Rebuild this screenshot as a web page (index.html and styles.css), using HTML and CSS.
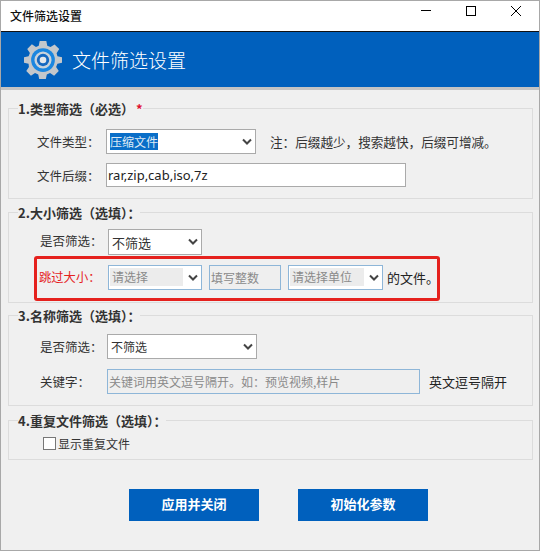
FILE: index.html
```html
<!DOCTYPE html>
<html lang="zh-CN">
<head>
    <meta charset="UTF-8">
    <title>文件筛选设置</title>
    <link rel="stylesheet" href="styles.css">
</head>
<body>
<div class="window">
    <div class="titlebar">
        <span class="title-text">文件筛选设置</span>
        <div class="win-btns">
            <svg width="12" height="12" viewBox="0 0 12 12"><path d="M1 5.500h10" stroke="#000" fill="none"/></svg>
            <svg width="12" height="12" viewBox="0 0 12 12"><rect x="1.500" y="1.500" width="9" height="9" stroke="#000" fill="none"/></svg>
            <svg width="12" height="12" viewBox="0 0 12 12"><path d="M1 1l10 10M11 1L1 11" stroke="#000" fill="none"/></svg>
        </div>
    </div>
    <div class="banner">
        <svg class="gear" width="38" height="38" viewBox="0 0 40 40">
            <path fill="#c3c7cb" d="M16.500 0h7l1 5 3.400 1.400 4.300-2.800 4.900 4.900-2.800 4.300L35.200 16l4.800 1v6l-4.800 1-1.400 3.400 2.800 4.300-4.900 4.900-4.300-2.800-3.400 1.400-1 4.800h-7l-1-4.800-3.400-1.400-4.300 2.800-4.900-4.900 2.800-4.300L4.800 24 0 23v-6l4.800-1 1.400-3.400-2.800-4.300 4.900-4.900 4.300 2.800L15.500 5z"/>
            <circle cx="20" cy="20" r="12.500" fill="#1a86e0"/>
            <circle cx="20" cy="20" r="9" fill="#c9d3dc"/>
            <circle cx="20" cy="20" r="6.500" fill="#1568c0"/>
            <circle cx="20" cy="20" r="3.500" fill="#e4e8ec"/>
        </svg>
        <h1 class="banner-title">文件筛选设置</h1>
    </div>
    <form class="content">
        <fieldset class="group group-type">
            <legend>1.类型筛选（必选）<span class="star">*</span></legend>
            <div class="row row-type">
                <label class="lbl">文件类型：</label>
                <div class="fake-select w150"><span class="picked">压缩文件</span><svg class="chev" width="10" height="7" viewBox="0 0 10 7"><path d="M1 1.500l4 4 4-4" fill="none" stroke="#444" stroke-width="2"/></svg></div>
                <span class="note">注：后缀越少，搜索越快，后缀可增减。</span>
            </div>
            <div class="row row-type row-second">
                <label class="lbl">文件后缀：</label>
                <div class="field w300">rar,zip,cab,iso,7z</div>
            </div>
        </fieldset>

        <fieldset class="group group-size">
            <legend>2.大小筛选（选填）：</legend>
            <div class="row row-size">
                <label class="lbl lbl-size">是否筛选：</label>
                <div class="fake-select w94 big">不筛选<svg class="chev" width="10" height="7" viewBox="0 0 10 7"><path d="M1 1.500l4 4 4-4" fill="none" stroke="#444" stroke-width="2"/></svg></div>
            </div>
            <div class="skip-box">
                <label class="lbl-red">跳过大小：</label>
                <div class="fake-select w94 off"><span class="off-text">请选择</span><svg class="chev" width="10" height="7" viewBox="0 0 10 7"><path d="M1 1.500l4 4 4-4" fill="none" stroke="#444" stroke-width="2"/></svg></div>
                <div class="field off w72">填写整数</div>
                <div class="fake-select w95 off"><span class="off-text">请选择单位</span><svg class="chev" width="10" height="7" viewBox="0 0 10 7"><path d="M1 1.500l4 4 4-4" fill="none" stroke="#444" stroke-width="2"/></svg></div>
                <span class="tail">的文件。</span>
            </div>
        </fieldset>

        <fieldset class="group group-name">
            <legend>3.名称筛选（选填）：</legend>
            <div class="row row-name">
                <label class="lbl">是否筛选：</label>
                <div class="fake-select w150">不筛选<svg class="chev" width="10" height="7" viewBox="0 0 10 7"><path d="M1 1.500l4 4 4-4" fill="none" stroke="#444" stroke-width="2"/></svg></div>
            </div>
            <div class="row row-name row-key">
                <label class="lbl">关键字：</label>
                <div class="field off w313">关键词用英文逗号隔开。如：预览视频,样片</div>
                <span class="tail tail-key">英文逗号隔开</span>
            </div>
        </fieldset>

        <fieldset class="group group-dup">
            <legend>4.重复文件筛选（选填）：</legend>
            <div class="check-row">
                <span class="check"></span>
                <span>显示重复文件</span>
            </div>
        </fieldset>

        <div class="actions">
            <button type="button" class="btn">应用并关闭</button>
            <button type="button" class="btn">初始化参数</button>
        </div>
    </form>
</div>
</body>
</html>
```

FILE: styles.css
```css
* {
    box-sizing: border-box;
}
html, body {
    margin: 0;
    padding: 0;
    height: 100%;
}
body {
    font-family: "Noto Sans CJK SC", "Liberation Sans", sans-serif;
    font-size: 12px;
    color: #222;
    background: #f0f0f0;
}
.window {
    width: 540px;
    height: 551px;
    border: 1px solid #a8a8a8;
    background: #f0f0f0;
    display: flex;
    flex-direction: column;
}

/* title bar */
.titlebar {
    height: 31px;
    flex: none;
    background: #fff;
    border-bottom: 1px solid #111;
    display: flex;
    align-items: center;
    justify-content: space-between;
    padding: 0 0 2px 9px;
}
.title-text {
    font-size: 12px;
    font-weight: 500;
    color: #111;
}
.win-btns {
    display: flex;
    gap: 33px;
    padding-right: 17px;
    margin-top: -8px;
}
.win-btns svg {
    display: block;
}

/* blue banner */
.banner {
    height: 55px;
    flex: none;
    background: #0060bd;
    display: flex;
    align-items: center;
    padding-left: 23px;
    gap: 10px;
}
.gear {
    display: block;
}
.banner-title {
    margin: 0;
    font-size: 19px;
    font-weight: 300;
    color: #fff;
}

.content {
    flex: 1;
    border-top: 3px solid #c4c4c4;
    padding: 10px 6px 0 7px;
}

/* groups */
.group {
    margin: 0;
    padding: 0;
    border: 1px solid #dcdcdc;
    min-width: 0;
}
.group legend {
    margin-left: 9px;
    padding: 1px 0 0;
    height: 16px;
    font-size: 13px;
    font-weight: 700;
    color: #333;
    line-height: 16px;
}
.star {
    color: #e01030;
    margin-left: 2px;
}
.group-type {
    height: 99px;
    padding-top: 13px;
}
.group-size {
    height: 99px;
    margin-top: 5px;
    padding-top: 9px;
}
.group-name {
    height: 99px;
    margin-top: 4px;
    padding-top: 11px;
}
.group-dup {
    height: 48px;
    margin-top: 6px;
    padding-top: 8px;
}

.row {
    display: flex;
    align-items: center;
}
.row-type {
    padding-left: 28px;
}
.row-name,
.row-size {
    padding-left: 31px;
}
.row-second {
    margin-top: 9px;
}
.row-key {
    margin-top: 10px;
}
.lbl {
    width: 67px;
    flex: none;
    font-size: 12.500px;
    color: #333;
}
.row-type .lbl {
    width: 69px;
}
.lbl-size {
    width: 68px;
    padding-bottom: 4px;
}

/* controls */
.fake-select,
.field {
    height: 25px;
    flex: none;
    background: #fff;
    border: 1px solid #aaa;
    display: flex;
    align-items: center;
    font-size: 12px;
    color: #333;
    position: relative;
}
.fake-select {
    padding-left: 3px;
}
.field {
    padding-left: 1px;
}
.big {
    height: 26px;
    font-size: 13px;
}
.chev {
    position: absolute;
    right: 3px;
    top: 8px;
}
.picked {
    background: #0a6ec8;
    color: #dfeaf5;
    line-height: 17px;
}
.w150 { width: 150px; }
.w300 { width: 300px; }
.w94 { width: 94px; }
.w95 { width: 95px; }
.w72 { width: 72px; }
.w313 { width: 313px; }

.field.w300 {
    font-family: "Noto Sans", "Noto Sans CJK SC", sans-serif;
    font-size: 13px;
    color: #222;
    height: 24px;
}

.off {
    border-color: #8eb6d8;
    color: #8a8a8a;
    padding-left: 1px;
}
.field.off {
    background: #efefef;
}
.off-text {
    background: #ececec;
    padding-left: 2px;
    flex: 1;
    margin-right: 18px;
    line-height: 18px;
}
.note {
    margin-left: 14px;
    font-size: 12.600px;
    color: #333;
    white-space: nowrap;
}
.tail {
    font-size: 13px;
    color: #222;
    white-space: nowrap;
}
.tail-key {
    margin-left: 9px;
}

/* red highlight */
.skip-box {
    width: 406px;
    height: 45px;
    margin: 1px 0 0 25px;
    border: 3px solid #e5211d;
    border-radius: 3px;
    display: flex;
    align-items: center;
    gap: 7px;
    padding: 0 0 3px 2px;
}
.lbl-red {
    width: 62px;
    flex: none;
    color: #e5211d;
    font-size: 12.300px;
    white-space: nowrap;
}
.skip-box .tail {
    margin-left: -3px;
}

.check-row {
    display: flex;
    align-items: center;
    gap: 2px;
    margin-left: 34px;
    color: #333;
    font-size: 12px;
    height: 14px;
}
.check {
    width: 13px;
    height: 13px;
    background: #fff;
    border: 1px solid #777;
}

/* bottom buttons */
.actions {
    display: flex;
    gap: 39px;
    margin-top: 29px;
    padding-left: 121px;
}
.btn {
    width: 130px;
    height: 32px;
    border: 0;
    padding: 0 0 3px;
    background: #0060bd;
    color: #fff;
    font-family: inherit;
    font-size: 13px;
    font-weight: 700;
}
```
